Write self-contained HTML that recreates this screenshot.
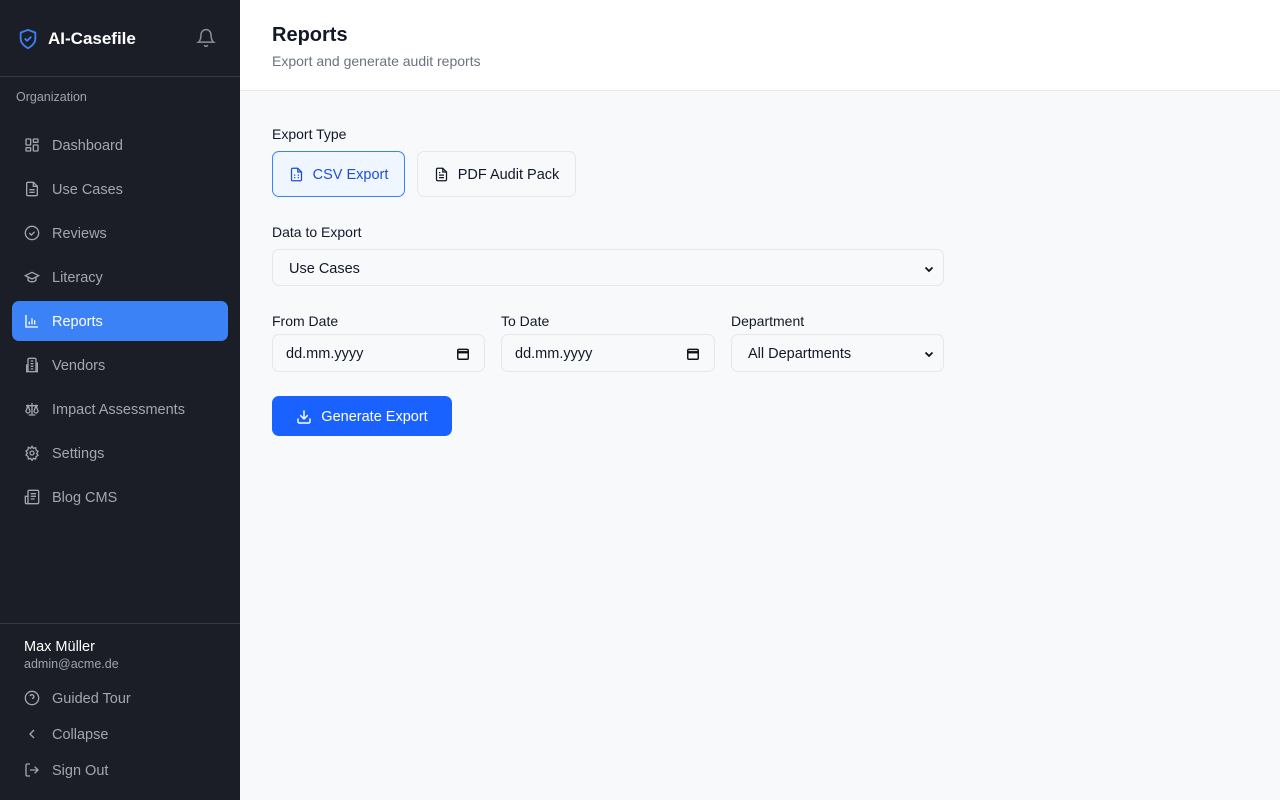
<!DOCTYPE html>
<html><head><meta charset="utf-8"><style>
*{box-sizing:border-box;margin:0;padding:0}
body{width:1280px;height:800px;font-family:"Liberation Sans",sans-serif;background:#f8f9fb;position:relative;overflow:hidden}
.sb{position:absolute;left:0;top:0;width:240px;height:800px;background:#1b1e26;color:#9ca3af}
.logo{position:absolute;left:17px;top:27px;display:flex;align-items:center;gap:9px;color:#fff;font-weight:bold;font-size:17px}
.bell{position:absolute;left:196px;top:28px}
.hr{position:absolute;left:0;width:240px;height:1px;background:#353943}
.org{position:absolute;left:16px;top:90px;font-size:12.5px;color:#9ca3af}
.nav{position:absolute;left:12px;width:216px;height:40px;border-radius:7px;display:flex;align-items:center;padding-left:12px;padding-top:2px;gap:12px;font-size:14.5px;color:#a1a6af}
.nav.act{background:#3b82f6;color:#fff}
.nav svg{width:16px;height:16px;flex:none;margin-top:-2px}
.main{position:absolute;left:240px;top:0;right:0}
.hdr{height:91px;background:#fff;border-bottom:1px solid #e5e7eb;padding:24px 32px}
.hdr h1{font-size:20px;color:#111827;font-weight:bold}
.hdr p{font-size:14px;color:#6b7280;margin-top:6px}
.lbl{position:absolute;font-size:14px;color:#111827}
.box{position:absolute;background:#f8f9fb;border:1px solid #e5e7eb;border-radius:7px;font-size:14.5px;color:#111827;display:flex;align-items:center;padding-top:2px}
.btn{position:absolute;display:flex;align-items:center;justify-content:center;gap:9px;font-size:14.5px;border-radius:7px;padding-top:1px}
</style></head><body>
<div class="sb">
<div class="logo"><svg width="22" height="24" viewBox="0 0 24 24" fill="none" stroke="#3b82f6" stroke-width="2" stroke-linecap="round" stroke-linejoin="round"><path d="M12 22s8-4 8-10V5l-8-3-8 3v7c0 6 8 10 8 10z"/><path d="M9 12l2 2 4-4"/></svg>AI-Casefile</div>
<svg class="bell" width="20" height="20" viewBox="0 0 24 24" fill="none" stroke="#8b909a" stroke-width="1.8" stroke-linecap="round"><path d="M6 8a6 6 0 0 1 12 0c0 7 3 9 3 9H3s3-2 3-9"/><path d="M10.3 21a1.9 1.9 0 0 0 3.4 0"/></svg>
<div class="hr" style="top:76px"></div>
<div class="org">Organization</div>
<div class="nav" style="top:125px"><svg viewBox="0 0 24 24" fill="none" stroke="currentColor" stroke-width="2"><rect x="3" y="3" width="7" height="9" rx="1"/><rect x="14" y="3" width="7" height="5" rx="1"/><rect x="14" y="12" width="7" height="9" rx="1"/><rect x="3" y="16" width="7" height="5" rx="1"/></svg>Dashboard</div>
<div class="nav" style="top:169px"><svg viewBox="0 0 24 24" fill="none" stroke="currentColor" stroke-width="2"><path d="M14 2H6a2 2 0 0 0-2 2v16a2 2 0 0 0 2 2h12a2 2 0 0 0 2-2V8z"/><path d="M14 2v6h6M8 13h8M8 17h8"/></svg>Use Cases</div>
<div class="nav" style="top:213px"><svg viewBox="0 0 24 24" fill="none" stroke="currentColor" stroke-width="2"><circle cx="12" cy="12" r="10"/><path d="M8 12l3 3 5-5"/></svg>Reviews</div>
<div class="nav" style="top:257px"><svg viewBox="0 0 24 24" fill="none" stroke="currentColor" stroke-width="2"><path d="M22 10L12 5 2 10l10 5 10-5z"/><path d="M6 12v5c3 3 9 3 12 0v-5"/></svg>Literacy</div>
<div class="nav act" style="top:301px"><svg viewBox="0 0 24 24" fill="none" stroke="currentColor" stroke-width="2"><path d="M3 3v18h18M8 17v-4M12 17V8M16 17v-6"/></svg>Reports</div>
<div class="nav" style="top:345px"><svg viewBox="0 0 24 24" fill="none" stroke="currentColor" stroke-width="2"><rect x="6" y="2" width="12" height="20" rx="2"/><path d="M6 12H4v10h2M18 9h2v13h-2M10 6h4M10 10h4M10 14h4M10 18h4"/></svg>Vendors</div>
<div class="nav" style="top:389px"><svg viewBox="0 0 24 24" fill="none" stroke="currentColor" stroke-width="2"><path d="M12 3v18M7 21h10M3 7h18M6 7l-3 8a3 3 0 0 0 6 0zM18 7l-3 8a3 3 0 0 0 6 0z"/></svg>Impact Assessments</div>
<div class="nav" style="top:433px"><svg viewBox="0 0 24 24" fill="none" stroke="currentColor" stroke-width="2"><circle cx="12" cy="12" r="3"/><path d="M12 2l2 3 3.5-1 .5 3.5 3 2-2 3 2 3-3 2-.5 3.5-3.5-1-2 3-2-3-3.5 1L6 17l-3-2 2-3-2-3 3-2 .5-3.5L10 5z"/></svg>Settings</div>
<div class="nav" style="top:477px"><svg viewBox="0 0 24 24" fill="none" stroke="currentColor" stroke-width="2"><path d="M4 22h16a2 2 0 0 0 2-2V4a2 2 0 0 0-2-2H8a2 2 0 0 0-2 2v16a2 2 0 0 1-4 0V11h4"/><path d="M10 7h8M10 11h8M10 15h6"/></svg>Blog CMS</div>
<div class="hr" style="top:623px"></div>
<div style="position:absolute;left:24px;top:639px;color:#fff;font-size:14.5px">Max Müller</div>
<div style="position:absolute;left:24px;top:657px;font-size:12.5px;color:#9ca3af">admin@acme.de</div>
<div class="nav" style="top:678px"><svg viewBox="0 0 24 24" fill="none" stroke="currentColor" stroke-width="2"><circle cx="12" cy="12" r="10"/><path d="M9.1 9a3 3 0 0 1 5.8 1c0 2-3 3-3 3M12 17h.01"/></svg>Guided Tour</div>
<div class="nav" style="top:714px"><svg viewBox="0 0 24 24" fill="none" stroke="currentColor" stroke-width="2"><path d="M15 18l-6-6 6-6"/></svg>Collapse</div>
<div class="nav" style="top:750px"><svg viewBox="0 0 24 24" fill="none" stroke="currentColor" stroke-width="2"><path d="M9 21H5a2 2 0 0 1-2-2V5a2 2 0 0 1 2-2h4M16 17l5-5-5-5M21 12H9"/></svg>Sign Out</div>
</div>
<div class="main">
<div class="hdr"><h1>Reports</h1><p>Export and generate audit reports</p></div>
</div>
<div class="lbl" style="left:272px;top:126px">Export Type</div>
<div class="btn" style="left:272px;top:151px;width:133px;height:46px;background:#eff6ff;border:1px solid #3b82f6;color:#1d4ed8"><svg width="15" height="15" viewBox="0 0 24 24" fill="none" stroke="currentColor" stroke-width="2"><path d="M14 2H6a2 2 0 0 0-2 2v16a2 2 0 0 0 2 2h12a2 2 0 0 0 2-2V8z"/><path d="M14 2v6h6M8 13h2M14 13h2M8 17h2M14 17h2"/></svg>CSV Export</div>
<div class="btn" style="left:417px;top:151px;width:159px;height:46px;background:#f8f9fb;border:1px solid #e5e7eb;color:#111827"><svg width="15" height="15" viewBox="0 0 24 24" fill="none" stroke="currentColor" stroke-width="2"><path d="M14 2H6a2 2 0 0 0-2 2v16a2 2 0 0 0 2 2h12a2 2 0 0 0 2-2V8z"/><path d="M14 2v6h6M8 13h8M8 17h8M8 9h2"/></svg>PDF Audit Pack</div>
<div class="lbl" style="left:272px;top:224px">Data to Export</div>
<div class="box" style="left:272px;top:249px;width:672px;height:37px;padding-left:16px">Use Cases<svg style="position:absolute;right:8px" width="12" height="12" viewBox="0 0 24 24" fill="none" stroke="#111" stroke-width="3.5"><path d="M5 9l7 7 7-7"/></svg></div>
<div class="lbl" style="left:272px;top:313px">From Date</div>
<div class="lbl" style="left:501px;top:313px">To Date</div>
<div class="lbl" style="left:731px;top:313px">Department</div>
<div class="box" style="left:272px;top:334px;width:213px;height:38px;padding-left:13px">dd.mm.yyyy<svg style="position:absolute;right:14px" width="14" height="14" viewBox="0 0 24 24" fill="none" stroke="#111" stroke-width="2.5"><rect x="3" y="4" width="18" height="17" rx="2"/><path d="M3 9h18" stroke-width="4"/></svg></div>
<div class="box" style="left:501px;top:334px;width:214px;height:38px;padding-left:13px">dd.mm.yyyy<svg style="position:absolute;right:14px" width="14" height="14" viewBox="0 0 24 24" fill="none" stroke="#111" stroke-width="2.5"><rect x="3" y="4" width="18" height="17" rx="2"/><path d="M3 9h18" stroke-width="4"/></svg></div>
<div class="box" style="left:731px;top:334px;width:213px;height:38px;padding-left:16px">All Departments<svg style="position:absolute;right:8px" width="12" height="12" viewBox="0 0 24 24" fill="none" stroke="#111" stroke-width="3.5"><path d="M5 9l7 7 7-7"/></svg></div>
<div class="btn" style="left:272px;top:396px;width:180px;height:40px;background:#1a62ff;color:#fff"><svg width="16" height="16" viewBox="0 0 24 24" fill="none" stroke="#fff" stroke-width="2.2" stroke-linecap="round"><path d="M21 15v4a2 2 0 0 1-2 2H5a2 2 0 0 1-2-2v-4M7 10l5 5 5-5M12 15V3"/></svg>Generate Export</div>
</body></html>
